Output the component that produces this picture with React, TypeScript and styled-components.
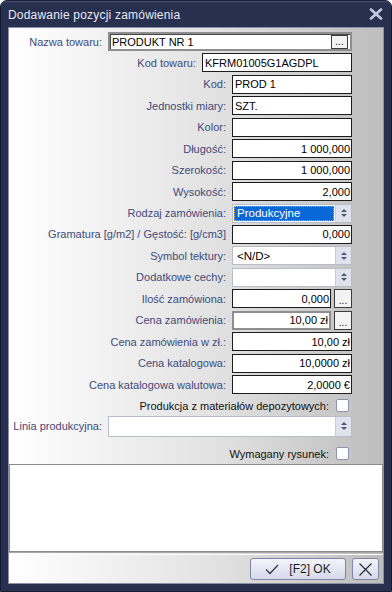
import React from 'react';
import styled, {createGlobalStyle} from 'styled-components';

const GlobalStyle = createGlobalStyle`
  html, body {
    margin: 0;
    padding: 0;
    background: #ffffff;
  }
  body {
    font-family: "Liberation Sans", Arial, sans-serif;
  }
  * {
    box-sizing: border-box;
  }
`;

const Window = styled.div`
  width: 392px;
  height: 592px;
  display: flex;
  flex-direction: column;
  background: #283050;
  border: 1px solid #151b33;
  border-radius: 7px 7px 0 0;
  padding: 0 7px 7px;
  box-shadow: inset 0 1px 0 #4a5378;
`;

const TitleBar = styled.div`
  height: 26px;
  display: flex;
  align-items: center;
  justify-content: space-between;
  padding: 0 1px 0 0;
  flex-shrink: 0;
`;

const Title = styled.span`
  color: #e6e9f2;
  font-size: 12px;
  letter-spacing: 0.2px;
  margin-top: 2px;
`;

const Client = styled.div`
  flex: 1;
  display: flex;
  flex-direction: column;
  border: 1px solid #8c92a6;
  background: linear-gradient(to right, #ffffff 0%, #e2e2e2 55%, #bdbdbd 100%);
`;

const Form = styled.div`
  display: flex;
  flex-direction: column;
  gap: 2.44px;
  padding: 4px 31px 0 0;
`;

const Row = styled.div<{$height?: number; $top?: number; $end?: boolean}>`
  display: flex;
  align-items: ${(p) => (p.$end ? 'flex-end' : 'center')};
  gap: 6px;
  height: ${(p) => p.$height ?? 19}px;
  margin-top: ${(p) => p.$top ?? 0}px;
  padding-bottom: ${(p) => (p.$end ? 3 : 0)}px;
`;

const Label = styled.span<{$width?: number; $dark?: boolean}>`
  flex: ${(p) => (p.$width ? '0 0 auto' : '1')};
  width: ${(p) => (p.$width ? `${p.$width}px` : 'auto')};
  text-align: right;
  white-space: nowrap;
  font-size: 11px;
  color: ${(p) => (p.$dark ? '#111111' : '#3f4a7a')};
`;

const TextBox = styled.div<{$right?: boolean; $variant?: 'framed' | 'focused'}>`
  flex: 1;
  height: 19px;
  display: flex;
  align-items: center;
  justify-content: ${(p) => (p.$right ? 'flex-end' : 'space-between')};
  background: #ffffff;
  border: ${(p) => (p.$variant ? '2px solid #8e8e8e' : '1px solid #1c1c1c')};
  box-shadow: ${(p) => (p.$variant === 'framed' ? 'inset 1px 1px 0 #4a4a4a' : 'none')};
  padding: 0 ${(p) => (p.$right ? 1 : 2)}px 0 2px;
  font-size: 11px;
  color: #000000;
  white-space: nowrap;
  overflow: hidden;
`;

const EllipsisButton = styled.div<{$small?: boolean}>`
  flex: 0 0 auto;
  width: ${(p) => (p.$small ? 17 : 18)}px;
  height: ${(p) => (p.$small ? 14 : 19)}px;
  margin-left: ${(p) => (p.$small ? 0 : -3)}px;
  display: flex;
  align-items: flex-end;
  justify-content: center;
  padding-bottom: 2px;
  background: #f3f3f3;
  border: 1px solid #3c3c3c;
  font-size: 10px;
  line-height: 8px;
  color: #111111;
`;

const Combo = styled.div<{$height?: number}>`
  flex: 1;
  height: ${(p) => p.$height ?? 19}px;
  display: flex;
  align-items: stretch;
  background: #ffffff;
  border: 1px solid #b9bccb;
  font-size: 11px;
  color: #000000;
`;

const ComboText = styled.div<{$selected?: boolean}>`
  flex: 1;
  display: flex;
  align-items: center;
  margin: 1px;
  padding: 0 3px;
  background: ${(p) => (p.$selected ? '#0a68d6' : 'transparent')};
  color: ${(p) => (p.$selected ? '#ffffff' : '#000000')};
  outline: ${(p) => (p.$selected ? '1px dotted #f0a030' : 'none')};
  outline-offset: -1px;
  font-size: 11.5px;
`;

const Spinner = styled.div`
  flex: 0 0 16px;
  display: flex;
  flex-direction: column;
  align-items: center;
  justify-content: center;
  gap: 2px;
  background: #e1e3ec;
  border-left: 1px solid #c9ccd8;
`;

const Arrow = styled.div<{$down?: boolean}>`
  width: 0;
  height: 0;
  border-left: 3px solid transparent;
  border-right: 3px solid transparent;
  ${(p) => (p.$down ? 'border-top: 3px solid #4f5870;' : 'border-bottom: 3px solid #4f5870;')}
`;

const CheckBox = styled.div`
  flex: 0 0 13px;
  width: 13px;
  height: 13px;
  margin: 0 3px 0 1px;
  background: #ffffff;
  border: 1px solid #8c93ae;
  border-radius: 2px;
`;

const Memo = styled.div`
  flex: 1;
  margin-top: 1px;
  background: #ffffff;
  border: 1px solid #8a8a8a;
`;

const Separator = styled.div`
  height: 3px;
  border-top: 1px solid #a8a8a8;
  border-bottom: 1px solid #fafafa;
`;

const ButtonBar = styled.div`
  height: 28px;
  display: flex;
  align-items: center;
  justify-content: flex-end;
  gap: 6px;
  padding: 0 4px 0 0;
`;

const DialogButton = styled.div<{$width: number}>`
  width: ${(p) => p.$width}px;
  height: 22px;
  display: flex;
  align-items: center;
  justify-content: center;
  gap: 10px;
  border: 1px solid #7f86a8;
  border-radius: 3px;
  background: linear-gradient(#f3f4fa, #d6d9ea);
  font-size: 12px;
  color: #1e1e1e;
`;

const Spin = () => (
  <Spinner>
    <Arrow/>
    <Arrow $down/>
  </Spinner>
);

type FieldRow = {
  label: string;
  value?: string;
  right?: boolean;
  combo?: boolean;
  selected?: boolean;
  ellipsis?: boolean;
  variant?: 'focused';
};

const rows: FieldRow[] = [
  {label: 'Kod:', value: 'PROD 1'},
  {label: 'Jednostki miary:', value: 'SZT.'},
  {label: 'Kolor:', value: ''},
  {label: 'Długość:', value: '1 000,000', right: true},
  {label: 'Szerokość:', value: '1 000,000', right: true},
  {label: 'Wysokość:', value: '2,000', right: true},
  {label: 'Rodzaj zamówienia:', value: 'Produkcyjne', combo: true, selected: true},
  {label: 'Gramatura [g/m2] / Gęstość: [g/cm3]', value: '0,000', right: true},
  {label: 'Symbol tektury:', value: '<N/D>', combo: true},
  {label: 'Dodatkowe cechy:', value: '', combo: true},
  {label: 'Ilość zamówiona:', value: '0,000', right: true, ellipsis: true},
  {label: 'Cena zamówienia:', value: '10,00 zł', right: true, ellipsis: true, variant: 'focused'},
  {label: 'Cena zamówienia w zł.:', value: '10,00 zł', right: true},
  {label: 'Cena katalogowa:', value: '10,0000 zł', right: true},
  {label: 'Cena katalogowa walutowa:', value: '2,0000 €', right: true},
];

export default function App() {
  return (
    <>
      <GlobalStyle/>
      <Window>
        <TitleBar>
          <Title>Dodawanie pozycji zamówienia</Title>
          <svg width="14" height="12" viewBox="0 0 14 12">
            <path d="M2 1.5 L12 10.5 M12 1.5 L2 10.5" stroke="#c3cadb" strokeWidth="2.6" strokeLinecap="round"/>
          </svg>
        </TitleBar>
        <Client>
          <Form>
            <Row>
              <Label $width={93}>Nazwa towaru:</Label>
              <TextBox $variant="framed">
                <span>PRODUKT NR 1</span>
                <EllipsisButton $small>...</EllipsisButton>
              </TextBox>
            </Row>
            <Row>
              <Label $width={187}>Kod towaru:</Label>
              <TextBox>KFRM01005G1AGDPL</TextBox>
            </Row>
            {rows.map((r) => (
              <Row key={r.label}>
                <Label $width={217}>{r.label}</Label>
                {r.combo ? (
                  <Combo>
                    <ComboText $selected={r.selected}>{r.value}</ComboText>
                    <Spin/>
                  </Combo>
                ) : (
                  <>
                    <TextBox $right={r.right} $variant={r.variant}>{r.value}</TextBox>
                    {r.ellipsis && <EllipsisButton>...</EllipsisButton>}
                  </>
                )}
              </Row>
            ))}
            <Row>
              <Label $dark>Produkcja z materiałów depozytowych:</Label>
              <CheckBox/>
            </Row>
            <Row $height={21} $top={-2}>
              <Label $width={93}>Linia produkcyjna:</Label>
              <Combo $height={21}>
                <ComboText/>
                <Spin/>
              </Combo>
            </Row>
            <Row $height={24} $end>
              <Label $dark>Wymagany rysunek:</Label>
              <CheckBox/>
            </Row>
          </Form>
          <Memo/>
          <Separator/>
          <ButtonBar>
            <DialogButton $width={96}>
              <svg width="14" height="11" viewBox="0 0 14 11">
                <path d="M1 5.5 L5 9.5 L13 1" fill="none" stroke="#333a4a" strokeWidth="1.3"/>
              </svg>
              <span>[F2] OK</span>
            </DialogButton>
            <DialogButton $width={27}>
              <svg width="15" height="15" viewBox="0 0 15 15">
                <path d="M1.5 1.5 L13.5 13.5 M13.5 1.5 L1.5 13.5" stroke="#2a2f3c" strokeWidth="1.2"/>
              </svg>
            </DialogButton>
          </ButtonBar>
        </Client>
      </Window>
    </>
  );
}
